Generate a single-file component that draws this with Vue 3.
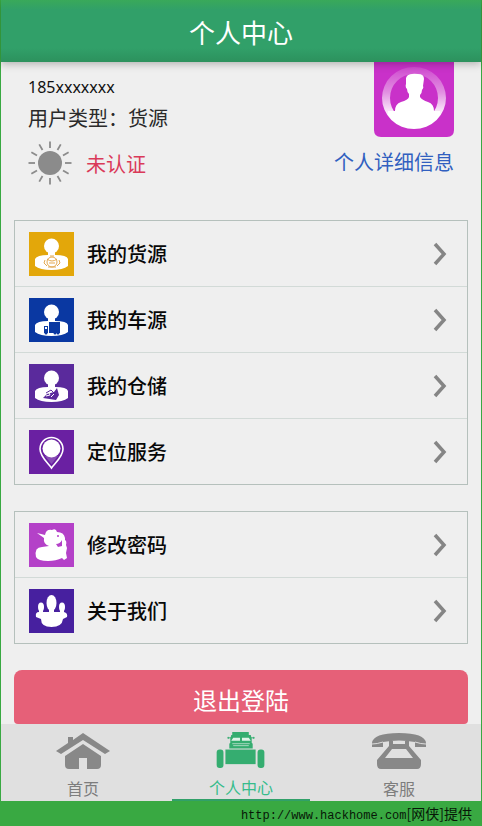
<script setup>
const sourceMenu = [
  { label: '我的货源', icon: 'cargo', color: '#e3a70a' },
  { label: '我的车源', icon: 'truck', color: '#0a38a2' },
  { label: '我的仓储', icon: 'storage', color: '#5a2a9c' },
  { label: '定位服务', icon: 'pin', color: '#6a20a2' }
]
const accountMenu = [
  { label: '修改密码', icon: 'password', color: '#b441c8' },
  { label: '关于我们', icon: 'team', color: '#47209f' }
]
const groups = [sourceMenu, accountMenu]
const rays = Array.from({ length: 12 }, (_, i) => i * 30)
</script>

<template>
  <div class="screen">
    <header class="topbar"><h1>个人中心</h1></header>

    <main class="content">
      <section class="profile">
        <div class="info">
          <p class="phone">185xxxxxxx</p>
          <p class="type">用户类型：货源</p>
          <div class="status">
            <svg class="sun" viewBox="0 0 44 44" aria-hidden="true">
              <circle cx="22" cy="22" r="12" fill="#8b8b8b" />
              <path v-for="r in rays" :key="r" d="M22 0.5V7" :transform="`rotate(${r} 22 22)`" stroke="#8b8b8b" stroke-width="1.8" />
            </svg>
            <span>未认证</span>
          </div>
        </div>
        <div class="side">
          <svg class="avatar" viewBox="0 0 80 75" aria-hidden="true">
            <defs>
              <linearGradient id="ring" x1="0" y1="0" x2="0" y2="1">
                <stop offset="0" stop-color="#fff" stop-opacity="0.12" />
                <stop offset="0.4" stop-color="#fff" stop-opacity="0.45" />
                <stop offset="0.8" stop-color="#fff" />
              </linearGradient>
              <clipPath id="face"><ellipse cx="40" cy="36" rx="31" ry="30" /></clipPath>
            </defs>
            <path d="M0 0H80V68Q80 75 73 75H7Q0 75 0 68Z" fill="#c931c9" />
            <path d="M8 36a32 31 0 1 0 64 0a32 31 0 1 0-64 0ZM16 36a24 24 0 1 1 48 0a24 24 0 1 1-48 0Z" fill="url(#ring)" fill-rule="evenodd" />
            <path clip-path="url(#face)" d="M33 14Q36 11 44 12Q50 12 50 17L49 24Q50 26 48 28Q48 31 46 33V35Q48 38 54 40Q60 42 60 49L66 49V70H14V49L21 49Q21 42 27 40Q34 38 35 35V32Q33 30 33 27Q31 25 32 22L32 16Z" fill="#fff" />
          </svg>
          <a href="#details">个人详细信息</a>
        </div>
      </section>

      <nav v-for="(group, g) in groups" :key="g" class="menu">
        <a v-for="item in group" :key="item.label" class="row" href="#item">
          <svg class="tile" viewBox="0 0 45 44" aria-hidden="true">
            <rect width="45" height="44" :fill="item.color" />
            <g v-if="['cargo', 'truck', 'storage'].includes(item.icon)" fill="#fff">
              <circle cx="22.5" cy="14" r="7.5" />
              <path d="M19 20H26V23Q38 23 39 27V34Q34 38 22.5 38T6 34V27Q8 23 19 23Z" />
            </g>
            <g v-if="item.icon === 'cargo'" fill="none" stroke="#e3a951">
              <circle cx="23" cy="30" r="5" />
              <path d="M18 27Q23 31 28 27M16 28L15 31 18 34M30 28L31 31 28 34M19 35H27M21 24H25M20 31H26" />
            </g>
            <g v-else-if="item.icon === 'truck'" :fill="item.color">
              <path d="M20 24H31V35H20ZM15 28H19V35H15V31Z" />
              <circle cx="17" cy="35" r="1.5" /><circle cx="26" cy="35" r="1.5" /><circle cx="29" cy="35" r="1.5" />
              <path d="M16 29H18V31H16Z" fill="#fff" />
            </g>
            <g v-else-if="item.icon === 'storage'" :fill="item.color">
              <path d="M14 34L18 30 25 28 28 24 30 31 27 36Z" />
              <path d="M17 29L22 26 25 29M21 32L27 30" fill="none" :stroke="item.color" />
              <path d="M17 32L21 31 20 29M22 33L25 30" fill="none" stroke="#fff" />
            </g>
            <g v-else-if="item.icon === 'pin'">
              <path d="M22.5 38C20 34 11 27 11 19A11.5 11.5 0 0 1 34 19C34 27 25 34 22.5 38Z" fill="none" stroke="#fff" stroke-width="1.6" />
              <circle cx="22.5" cy="18.5" r="9" fill="#fff" />
              <path d="M16 26L22.5 34 29 26Z" fill="#fff" opacity="0.2" />
            </g>
            <g v-else-if="item.icon === 'password'" fill="#fff">
              <path d="M8 10L16 12Q17 6 23 7Q27 5 28 9Q35 9 36 15V17Q38 18 37 22L38 25 37 30 38 35 35 37 33 35Q27 38 19 38Q9 38 7 34Q5 24 13 24L20 23Q14 21 15 15Z" />
              <path d="M27 21Q31 21 33 17V23L29 24Z" :fill="item.color" />
              <circle cx="29" cy="13" r="1" :fill="item.color" />
            </g>
            <g v-else fill="#fff">
              <ellipse cx="22.5" cy="14" rx="5" ry="8" />
              <ellipse cx="12" cy="18" rx="3" ry="4.5" /><ellipse cx="33" cy="18" rx="3" ry="4.5" />
              <path d="M10 21H14V23H20V20H25V23H31V21H35V23Q39 24 38 28L34 30Q33 38 22.5 38T12 30L7 28Q6 23 10 23Z" />
            </g>
          </svg>
          <span class="label">{{ item.label }}</span>
          <svg class="chevron" viewBox="0 0 14 24" aria-hidden="true">
            <path d="M2 2L11 12 2 22" fill="none" stroke="#858585" stroke-width="3.5" />
          </svg>
        </a>
      </nav>

      <button class="logout" type="button">退出登陆</button>
    </main>

    <nav class="tabs">
      <a class="tab" href="#home">
        <svg viewBox="0 0 54 38" aria-hidden="true">
          <path d="M0 19L12 11V5H17V8L27 1 54 19 49 22 27 8 5 22Z" fill="#888" />
          <path d="M27 12L45 24V33Q45 37 41 37H31V26H23V37H13Q9 37 9 33V24Z" fill="#888" />
        </svg>
        <span>首页</span>
      </a>
      <a class="tab active" href="#me">
        <svg viewBox="0 0 54 38" aria-hidden="true">
          <g fill="#35ad70">
            <rect x="2" y="18" width="7" height="19" rx="3" />
            <rect x="44" y="18" width="7" height="19" rx="3" />
            <rect x="11" y="18" width="31" height="15" />
            <path d="M18 0H35V3H37L38 7V11L39 12V17H15V12L16 11V7L17 3H18Z" />
            <path d="M13 6H17M37 6H41M14 5V7M40 5V7" stroke="#35ad70" />
          </g>
          <path d="M19 6H26V9H17ZM28 6H35L37 9H28Z" fill="#dff3e8" />
          <path d="M18 12H36M19 14H35" stroke="#a6d8bd" />
        </svg>
        <span>个人中心</span>
      </a>
      <a class="tab" href="#service">
        <svg viewBox="0 0 54 38" aria-hidden="true">
          <path d="M0 11Q1 1 27 1T54 11V15H43V10Q27 7 11 10V15H0Z" fill="#888" />
          <path d="M0 12Q5 12 11 10M54 12Q49 12 43 10" fill="none" stroke="#ddd" />
          <path fill-rule="evenodd" d="M17 9H21V12H33V9H37V14L49 28V32Q49 37 45 37H9Q5 37 5 32V28L17 14ZM20 17L13 26H41L34 17Z" fill="#888" />
        </svg>
        <span>客服</span>
      </a>
    </nav>

    <footer class="credit"><span class="url">http://www.hackhome.com</span>[网侠]提供</footer>
  </div>
</template>

<style>
body {
  background: #39a942;
}
</style>

<style scoped>
.screen {
  margin: 0 1px;
  background: #efefef;
  color: #111;
  font-family: "Noto Sans CJK SC", sans-serif;
}
a {
  color: inherit;
  text-decoration: none;
}
.topbar {
  position: relative;
  height: 62px;
  display: flex;
  align-items: center;
  justify-content: center;
  background: linear-gradient(#39a95a, #31a069 10px, #31a069 48px, #2c915d);
  box-shadow: 0 2px 8px #0004;
}
h1 {
  margin: 0;
  color: #fff;
  font-size: 26px;
  font-weight: 400;
}
.content {
  padding: 0 13px;
}
.profile {
  display: flex;
  justify-content: space-between;
  height: 158px;
  padding: 0 14px;
  box-sizing: border-box;
}
.info {
  padding-top: 12px;
}
p {
  margin: 0;
}
.phone {
  font: 16px/26px "Noto Sans", sans-serif;
}
.type {
  line-height: 36px;
  font-size: 20px;
  color: #2a2a2a;
}
.status {
  display: flex;
  align-items: center;
  gap: 14px;
  margin-top: 5px;
  color: #da3a59;
  font-size: 20px;
}
.sun {
  width: 44px;
  height: 44px;
}
.side {
  display: flex;
  flex-direction: column;
  align-items: flex-end;
  gap: 10px;
  color: #315fc0;
  font-size: 20px;
  line-height: 30px;
}
.avatar {
  width: 80px;
  height: 75px;
}
.menu {
  margin-bottom: 26px;
  border: 1px solid #b5c0bc;
}
.row {
  display: flex;
  align-items: center;
  height: 65px;
  padding: 0 20px 0 14px;
  color: #080808;
  font-size: 20px;
}
.row + .row {
  border-top: 1px solid #d2dad7;
}
.tile {
  width: 45px;
  height: 44px;
  margin-right: 13px;
}
.label {
  flex: 1;
  font-weight: 500;
}
.chevron {
  width: 14px;
  height: 24px;
}
.logout {
  display: block;
  width: 100%;
  height: 54px;
  padding: 4px 0 0;
  border: 0;
  border-radius: 8px 8px 4px 4px;
  background: #e66078;
  color: #fff;
  font: 24px "Noto Sans CJK SC", sans-serif;
}
.tabs {
  display: flex;
  justify-content: center;
  gap: 20px;
  height: 77px;
  background: #e0e0e0;
}
.tab {
  flex: 0 1 138px;
  display: flex;
  flex-direction: column;
  align-items: center;
  box-sizing: border-box;
  padding-top: 8px;
  color: #7d7d7d;
  font-size: 16px;
  line-height: 24px;
}
.tab svg {
  width: 54px;
  height: 38px;
  margin-bottom: 6px;
}
.tab.active {
  border-bottom: 2px solid #31a069;
  color: #35bc8b;
}
.credit {
  padding-right: 9px;
  background: #39a942;
  color: #071707;
  font-size: 14px;
  line-height: 24px;
  text-align: right;
}
.url {
  font: 12px "Liberation Mono", monospace;
}
</style>
